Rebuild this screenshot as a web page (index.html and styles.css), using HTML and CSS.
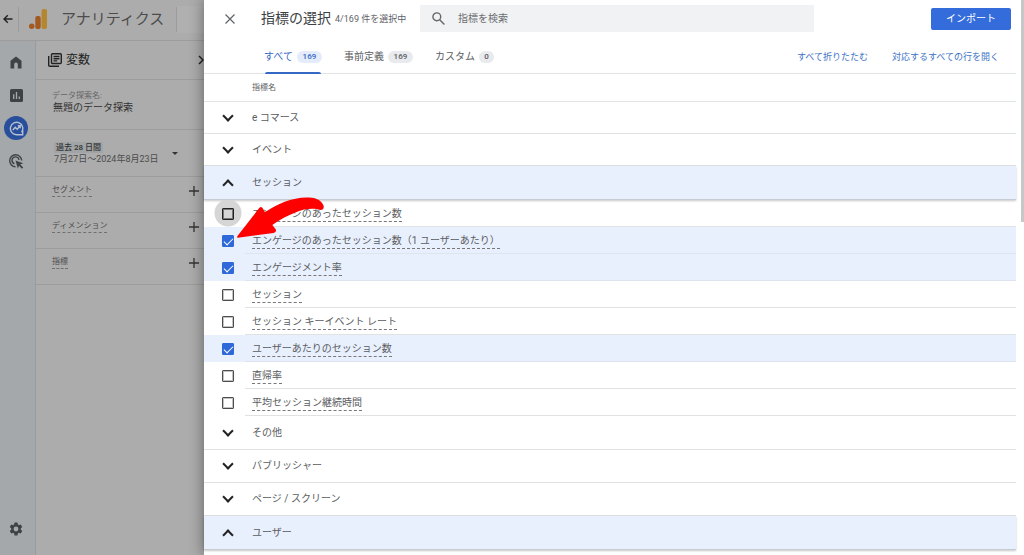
FILE: index.html
```html
<!DOCTYPE html>
<html lang="ja">
<head>
<meta charset="utf-8">
<title>アナリティクス</title>
<link rel="stylesheet" href="styles.css">
</head>
<body>
<div class="shell">
  <div class="app">
    <header class="topbar">
      <button class="icon-btn back" aria-label="戻る"><svg width="10" height="10" viewBox="0 0 10 10" fill="none" stroke="#222" stroke-width="1.4"><path d="M9.5 5H1M4.8 1.2L1 5l3.8 3.8"/></svg></button>
      <div class="brand">
        <svg width="18" height="20" viewBox="0 0 18 20"><rect x="12.5" y="0" width="5.5" height="20" rx="2" fill="#b4862e"/><rect x="6.3" y="7" width="5.4" height="13" rx="2" fill="#a4591f"/><circle cx="2.7" cy="17.3" r="2.7" fill="#a4591f"/></svg>
        <span>アナリティクス</span>
      </div>
      <div class="top-search"></div>
    </header>
    <div class="work">
      <nav class="rail">
        <button class="icon-btn" aria-label="ホーム"><svg width="12" height="13" viewBox="0 0 12 13" fill="#3f4244"><path d="M6 .5L.5 4.800V12.500h3.700V8.300a1.800 1.800 0 0 1 3.600 0v4.200h3.700V4.800z"/></svg></button>
        <button class="icon-btn" aria-label="レポート"><svg width="13" height="13" viewBox="0 0 13 13"><rect width="13" height="13" rx="1.500" fill="#3f4244"/><path d="M3.700 5.300V10M6.500 3v7M9.300 7.500V10" stroke="#a5a8aa" stroke-width="1.300"/></svg></button>
        <button class="icon-btn active" aria-label="探索"><svg width="15" height="15" viewBox="0 0 15 15" fill="none" stroke="#b5bfd2" stroke-width="1.400"><path d="M12.500 11.300A6.200 6.200 0 1 0 7.500 13.700H13.700V7.500"/><path d="M3.800 9l2.400-2.700 2 2L11 5M8.800 4.800h2.400v2.400"/></svg></button>
        <button class="icon-btn" aria-label="広告"><svg width="15" height="15" viewBox="0 0 15 15" fill="none" stroke="#3f4244" stroke-width="1.400"><path d="M6.500 12.800A6 6 0 1 1 12.700 6.500M5.500 9.700A3.500 3.500 0 1 1 10 5.800"/><path d="M6.500 6.500l7.700 2.800-3 1.200 3 3-1.200 1.200-3-3-1.200 2.800z" fill="#3f4244" stroke="none"/></svg></button>
        <button class="icon-btn settings" aria-label="管理"><svg width="16" height="16" viewBox="0 0 24 24" fill="#3f4244"><path d="M19.140 12.940c.04-.3.060-.61.060-.94 0-.32-.020-.640-.070-.940l2.030-1.580a.49.49 0 0 0 .120-.610l-1.920-3.320a.49.49 0 0 0-.590-.220l-2.390.96a7 7 0 0 0-1.620-.94l-.36-2.540a.48.48 0 0 0-.48-.41h-3.840a.47.47 0 0 0-.47.41l-.36 2.540a7.400 7.400 0 0 0-1.620.94l-2.390-.96a.48.48 0 0 0-.59.220L2.740 8.870a.47.47 0 0 0 .120.610l2.030 1.580a6 6 0 0 0-.020 1.880l-2.030 1.580a.49.49 0 0 0-.120.610l1.920 3.320c.120.220.370.290.590.220l2.390-.96c.5.380 1.030.7 1.620.94l.36 2.540c.050.240.240.410.480.410h3.840c.240 0 .440-.170.470-.410l.360-2.540a7 7 0 0 0 1.620-.94l2.390.96c.220.080.470 0 .59-.220l1.920-3.320a.47.47 0 0 0-.120-.610zM12 15.600a3.600 3.600 0 1 1 0-7.200 3.600 3.600 0 0 1 0 7.200z"/></svg></button>
      </nav>
      <section class="variables">
        <div class="var-head">
          <svg width="14" height="14" viewBox="0 0 14 14" fill="none" stroke="#222" stroke-width="1.400"><rect x="3.500" y=".7" width="9.800" height="9.800" rx="1"/><path d="M.7 3v9.300a1 1 0 0 0 1 1H11M5.500 3.500h6M5.500 5.700h6M5.500 7.900h3.700"/></svg>
          <h2>変数</h2>
          <button class="icon-btn collapse" aria-label="折りたたむ"><svg width="6" height="10" viewBox="0 0 6 10" fill="none" stroke="#222" stroke-width="1.500"><path d="M1 1l4 4-4 4"/></svg></button>
        </div>
        <div class="var-name"><small>データ探索名:</small><span>無題のデータ探索</span></div>
        <button class="var-date"><span class="range"><b>過去 28 日間</b><span>7月27日～2024年8月23日</span></span><i class="caret"></i></button>
        <div class="var-row"><span class="dash">セグメント</span><button class="icon-btn" aria-label="セグメントを追加"><svg width="10" height="10" viewBox="0 0 10 10" stroke="#333" stroke-width="1.300"><path d="M5 0v10M0 5h10"/></svg></button></div>
        <div class="var-row"><span class="dash">ディメンション</span><button class="icon-btn" aria-label="ディメンションを追加"><svg width="10" height="10" viewBox="0 0 10 10" stroke="#333" stroke-width="1.300"><path d="M5 0v10M0 5h10"/></svg></button></div>
        <div class="var-row"><span class="dash">指標</span><button class="icon-btn" aria-label="指標を追加"><svg width="10" height="10" viewBox="0 0 10 10" stroke="#333" stroke-width="1.300"><path d="M5 0v10M0 5h10"/></svg></button></div>
      </section>
    </div>
  </div>

  <main class="dialog">
    <div class="content">
      <header class="dialog-head">
        <div class="head-row">
          <button class="icon-btn" aria-label="閉じる"><svg width="10" height="10" viewBox="0 0 10 10" stroke="#5f6368" stroke-width="1.200"><path d="M.5.5l9 9M9.500.5l-9 9"/></svg></button>
          <div class="title"><h1>指標の選択</h1><span>4/169 件を選択中</span></div>
          <label class="search">
            <svg width="13" height="13" viewBox="0 0 13 13" fill="none" stroke="#666" stroke-width="1.400"><circle cx="4.800" cy="4.800" r="3.900"/><path d="M7.700 7.700l4.700 4.700"/></svg>
            <input type="text" placeholder="指標を検索" aria-label="指標を検索">
          </label>
          <button class="import">インポート</button>
        </div>
        <div class="tab-row">
          <button class="tab selected">すべて<span class="badge">169</span></button>
          <button class="tab">事前定義<span class="badge">169</span></button>
          <button class="tab">カスタム<span class="badge single">0</span></button>
          <div class="links"><a href="#">すべて折りたたむ</a><a href="#">対応するすべての行を開く</a></div>
        </div>
      </header>
      <div class="column-name">指標名</div>
      <button class="group"><i class="chev"></i>e コマース</button>
      <button class="group"><i class="chev"></i>イベント</button>
      <button class="group open"><i class="chev"></i>セッション</button>
      <ul class="items">
        <li class="hover"><input type="checkbox" id="m1"><div class="cell"><label for="m1">エンゲージのあったセッション数</label></div></li>
        <li class="on"><input type="checkbox" id="m2" checked><div class="cell"><label for="m2">エンゲージのあったセッション数（1 ユーザーあたり）</label></div></li>
        <li class="on"><input type="checkbox" id="m3" checked><div class="cell"><label for="m3">エンゲージメント率</label></div></li>
        <li><input type="checkbox" id="m4"><div class="cell"><label for="m4">セッション</label></div></li>
        <li><input type="checkbox" id="m5"><div class="cell"><label for="m5">セッション キーイベント レート</label></div></li>
        <li class="on"><input type="checkbox" id="m6" checked><div class="cell"><label for="m6">ユーザーあたりのセッション数</label></div></li>
        <li><input type="checkbox" id="m7"><div class="cell"><label for="m7">直帰率</label></div></li>
        <li><input type="checkbox" id="m8"><div class="cell"><label for="m8">平均セッション継続時間</label></div></li>
        <li class="pointer" aria-hidden="true"><svg width="90" height="45" viewBox="105 105 270 135" fill="#fe0000"><path d="M114 233Q109 232 113 227L177 145Q184 137 189 146L195 157C235 129 285 108 335 113C354 115 367 125 371 138Q373 150 361 150C340 143 312 147 290 156C264 166 238 180 217 195L227 208Q231 217 221 219Z"/></svg></li>
      </ul>
      <button class="group"><i class="chev"></i>その他</button>
      <button class="group"><i class="chev"></i>パブリッシャー</button>
      <button class="group"><i class="chev"></i>ページ / スクリーン</button>
      <button class="group open"><i class="chev"></i>ユーザー</button>
    </div>
    <div class="scrollbar"><div class="thumb"></div></div>
  </main>
</div>
</body>
</html>
```

FILE: styles.css
```css
*, *::before, *::after { box-sizing: border-box; }
body {
  margin: 0;
  overflow: hidden;
  background: #fff;
  color: #5a5d61;
  font-family: Roboto, "Noto Sans CJK JP", sans-serif;
  font-size: 10px;
  line-height: 14px;
}
h1, h2 { margin: 0; font-weight: 400; }
button { margin: 0; padding: 0; border: 0; background: none; color: inherit; font: inherit; text-align: left; cursor: pointer; }
svg { display: block; flex: none; }
.icon-btn { display: grid; place-items: center; flex: none; }
.shell { display: flex; height: 100vh; }

/* Dimmed application behind the dialog */
.app { width: 204px; flex: none; display: flex; flex-direction: column; background: #acacac; color: #4c4c4c; }
.topbar { display: flex; align-items: center; height: 41px; flex: none; border-bottom: 1px solid #9c9c9c; padding: 0 0 2px 3px; }
.brand {
  display: flex; align-items: center; gap: 14px; width: 159px; height: 25px;
  margin-left: 5px; padding-left: 10px; border: solid #9c9c9c; border-width: 0 1px;
  font-size: 15px; white-space: nowrap;
}
.top-search { flex: 1; height: 27px; background: #b0b0b0; }
.work { display: flex; flex: 1; min-height: 0; }
.rail {
  display: flex; flex-direction: column; align-items: center; gap: 9px;
  width: 36px; padding: 9px 3px 14px 0; background: #a5a8aa; border-right: 1px solid #999c9c;
}
.rail .icon-btn { width: 24px; height: 24px; border-radius: 50%; }
.rail .active { background: #284f9b; }
.rail .settings { margin-top: auto; }
.variables { flex: 1; min-width: 0; }
.var-head { display: flex; align-items: center; gap: 4px; height: 39px; padding-left: 12px; border-bottom: 1px solid #9c9c9c; }
.var-head h2 { font-size: 12px; color: #222; }
.collapse { margin-left: auto; }
.var-name { display: flex; flex-direction: column; height: 50px; padding: 10px 0 0 16px; border-bottom: 1px solid #9c9c9c; }
.var-name small { font-size: 8px; line-height: 12px; color: #666; }
.var-name span { padding-left: 1px; line-height: 12px; color: #333; }
.var-date { display: flex; align-items: center; gap: 13px; width: 100%; height: 47px; padding-left: 18px; border-bottom: 1px solid #9c9c9c; }
.range { display: flex; flex-direction: column; align-items: flex-start; font-size: 9px; line-height: 12px; white-space: nowrap; }
.range b { padding: 0 2px; background: #a1a4a6; font-size: 8px; font-weight: 500; line-height: 11px; color: #333; }
.caret { border: solid transparent; border-width: 3px 3px 0; border-top-color: #333; }
.var-row { display: flex; justify-content: space-between; align-items: flex-start; height: 36px; padding: 7px 5px 0 16px; border-bottom: 1px solid #9c9c9c; font-size: 8px; }
.var-row .icon-btn { height: 14px; }
.dash { line-height: 12px; border-bottom: 1px dashed #707070; }

/* Metric picker */
.dialog { position: relative; display: flex; flex: 1; min-width: 0; background: #fff; box-shadow: 0 0 14px rgba(0, 0, 0, .45); }
.content { flex: 1; min-width: 0; }
.dialog-head { height: 74px; border-bottom: 1px solid #e3e4e6; }
.head-row { display: flex; align-items: center; height: 37px; padding: 0 5px 0 21px; }
.title { display: flex; align-items: center; gap: 4px; width: 159px; margin-left: 26px; white-space: nowrap; color: #5f6368; font-size: 9px; }
.title h1 { font-size: 14px; line-height: 20px; padding-bottom: 2px; color: #3c4043; }
.search { display: flex; align-items: center; gap: 13px; flex: 1; height: 27px; padding: 0 12px; background: #f1f2f3; }
.search input { flex: 1; min-width: 0; padding: 0; border: 0; outline: 0; background: none; font: inherit; color: inherit; }
.search input::placeholder { color: #6a6d70; }
.import { width: 80px; height: 22px; margin-left: 117px; border-radius: 2px; background: #356cdb; color: #fff; text-align: center; }
.tab-row { display: flex; gap: 22px; height: 37px; padding: 0 17px 0 60px; }
.tab { position: relative; display: flex; align-items: center; gap: 4px; padding-top: 3px; white-space: nowrap; }
.badge { width: 25px; border-radius: 6px; background: #e8eaed; font-size: 8px; font-weight: 500; line-height: 12px; text-align: center; }
.badge.single { width: 15px; }
.selected { color: #3468c4; }
.selected .badge { background: #e4ecfb; }
.selected::after { content: ""; position: absolute; left: 1px; right: 1px; bottom: 0; height: 2px; border-radius: 2px 2px 0 0; background: #3468c4; }
.links { display: flex; align-items: center; gap: 24px; margin-left: auto; padding-top: 3px; font-size: 9px; }
.links a { color: #3d73c6; text-decoration: none; white-space: nowrap; }
.column-name { height: 28px; padding: 7px 0 0 48px; border-bottom: 1px solid #e3e4e6; font-size: 8px; }
.group { display: flex; align-items: center; width: 100%; height: 33px; border-bottom: 1px solid #e0e1e3; }
.group.open { position: relative; height: 34px; background: #e8effd; border-bottom-color: #c6cbd3; box-shadow: 0 1px 2px rgba(0, 0, 0, .22); z-index: 1; }
.column-name + .group, .column-name + .group + .group { height: 32px; }
.chev { display: grid; place-items: center; width: 48px; height: 14px; }
.chev::before { content: ""; width: 8px; height: 8px; margin-bottom: 4px; border: solid #222; border-width: 0 2px 2px 0; transform: rotate(45deg); }
.open .chev::before { margin: 4px 0 0; border-width: 2px 0 0 2px; }
.items { position: relative; margin: 0; padding: 0 0 1px; list-style: none; z-index: 2; }
.items li { display: flex; align-items: center; height: 27px; padding-left: 18px; }
.items .on { background: #e8effd; }
.cell { display: flex; align-items: center; flex: 1; height: 27px; margin-left: 11px; padding: 2px 0 0 7px; border-bottom: 1px solid #e0e1e3; }
.on .cell { border-color: #dde4f0; }
.cell label { border-bottom: 1px dashed #777; line-height: 14px; white-space: nowrap; }
.items input { appearance: none; display: grid; place-items: center; flex: none; width: 12px; height: 12px; margin: 0; border: 1px solid #4c4c4c; border-radius: 1px; box-shadow: inset 0 0 0 1px #c4c4c4; }
.items input:checked { border-color: #2f69d9; background: #2f69d9; box-shadow: none; }
.items input:checked::before { content: ""; width: 5px; height: 9px; margin-bottom: 2px; border: solid #fff; border-width: 0 1px 1px 0; transform: rotate(45deg); }
.items .hover { background: radial-gradient(circle at 24px 13px, #d6d6d6 13px, transparent 14px); }
.items .hover input { border-color: #222; box-shadow: inset 0 0 0 1px #777; }
.items .pointer { position: absolute; left: 31px; top: -5px; height: 45px; padding: 0; pointer-events: none; }
.scrollbar { display: flex; justify-content: flex-end; width: 8px; flex: none; }
.thumb { width: 3px; height: 40%; background: #c6c7c8; }
```
